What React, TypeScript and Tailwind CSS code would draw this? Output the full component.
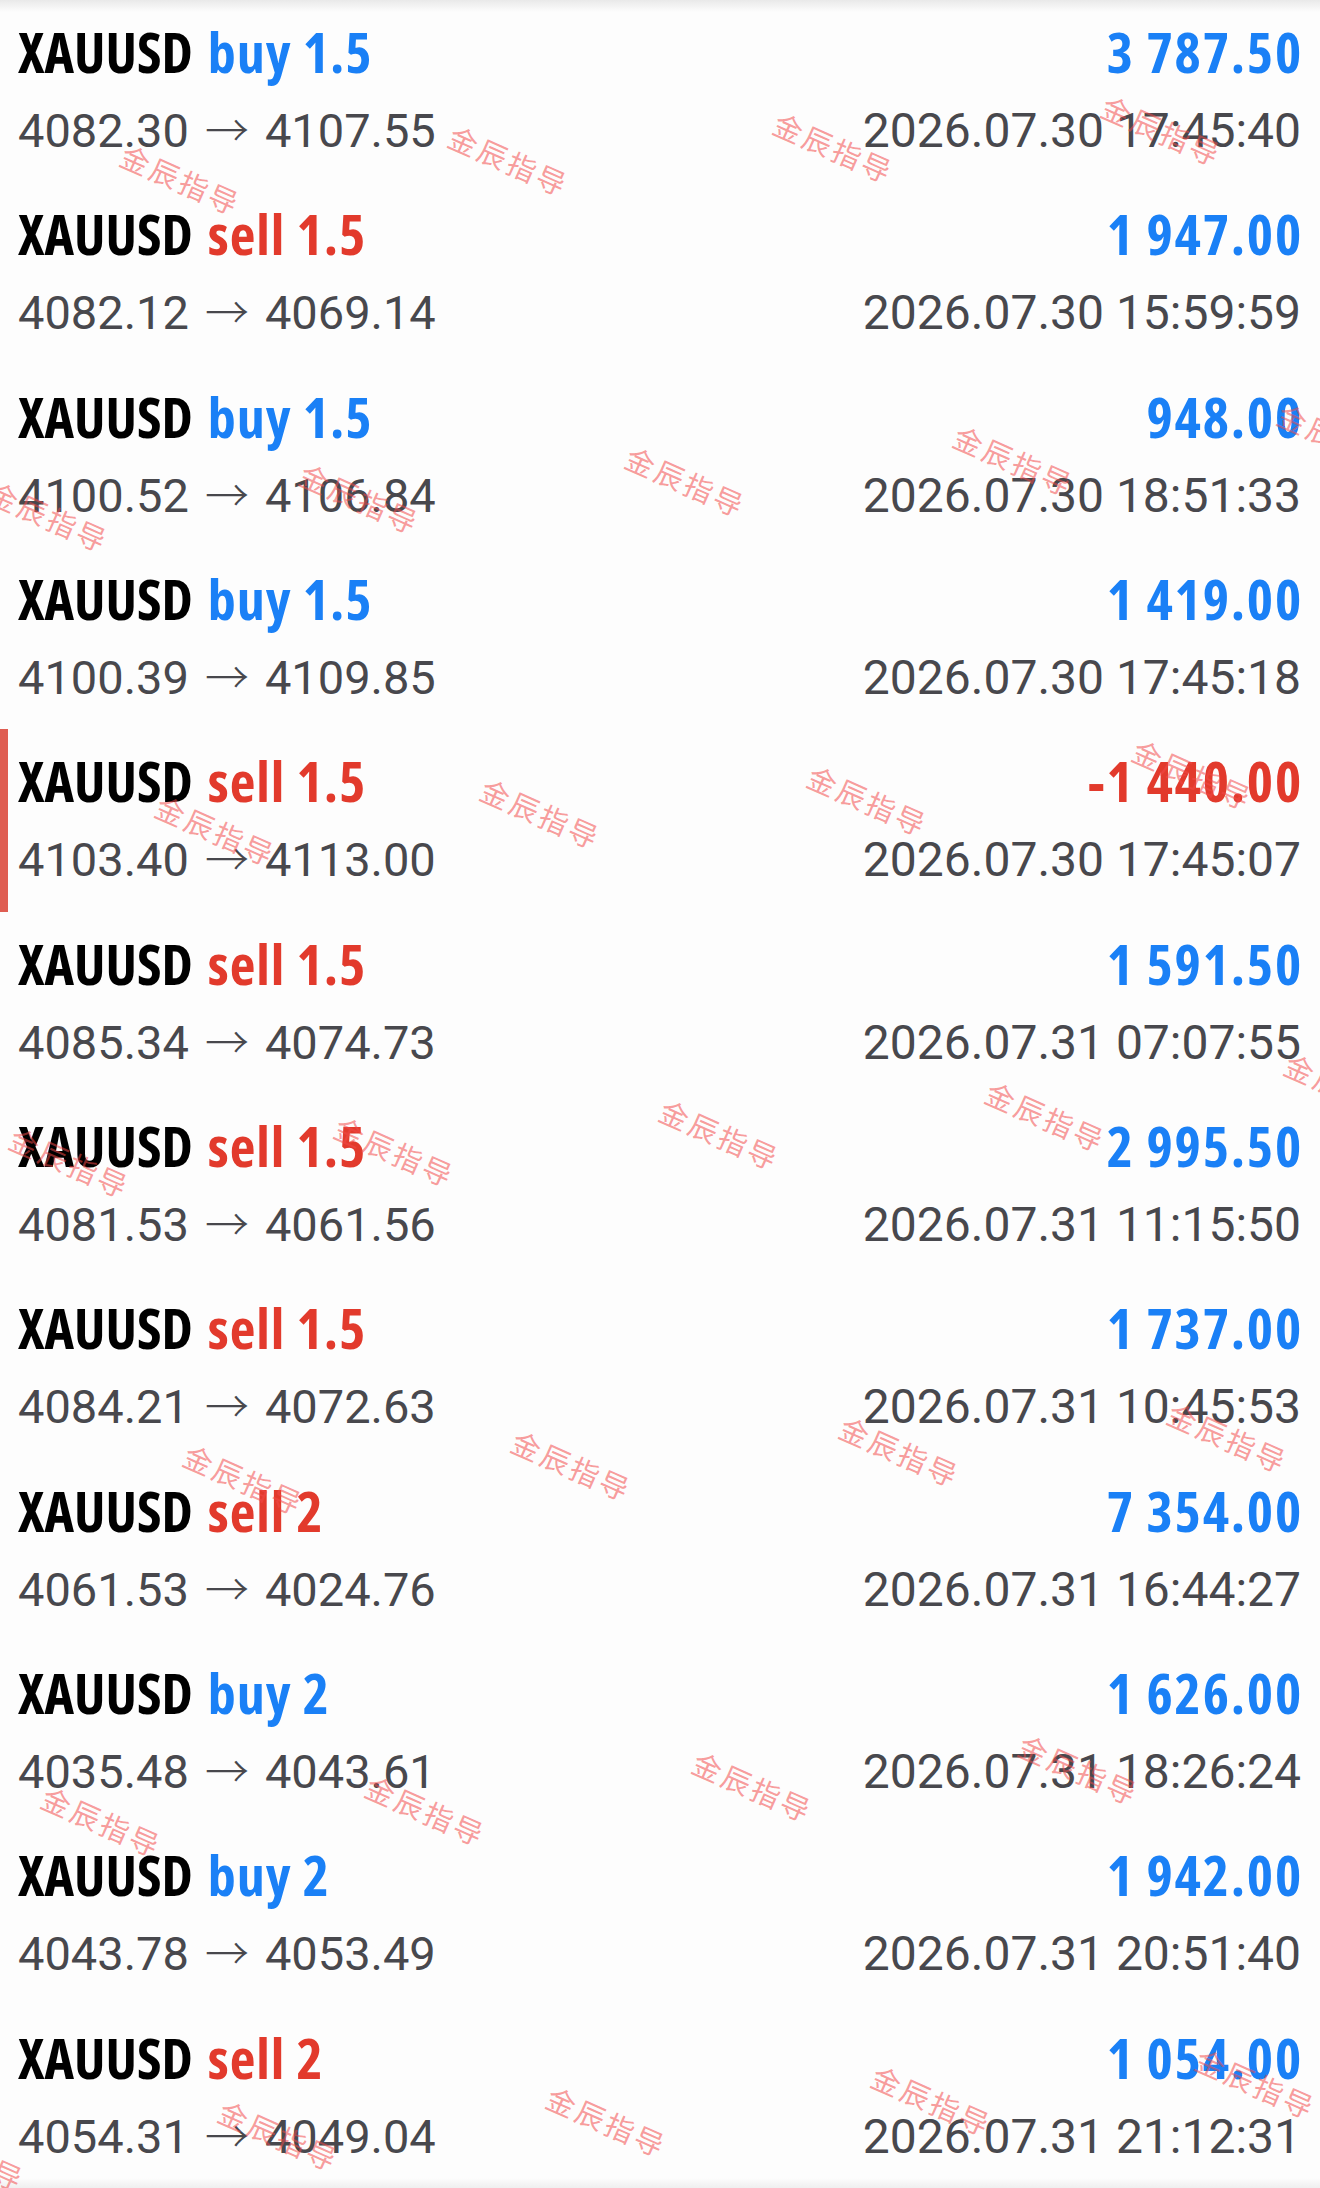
import React from "react";

type Trade = {
  side: "buy" | "sell";
  lot: string;
  profit: string;
  open: string;
  close: string;
  time: string;
  active?: boolean;
};

const trades: Trade[] = [
  { side: "buy", lot: "1.5", profit: "3 787.50", open: "4082.30", close: "4107.55", time: "2026.07.30 17:45:40" },
  { side: "sell", lot: "1.5", profit: "1 947.00", open: "4082.12", close: "4069.14", time: "2026.07.30 15:59:59" },
  { side: "buy", lot: "1.5", profit: "948.00", open: "4100.52", close: "4106.84", time: "2026.07.30 18:51:33" },
  { side: "buy", lot: "1.5", profit: "1 419.00", open: "4100.39", close: "4109.85", time: "2026.07.30 17:45:18" },
  { side: "sell", lot: "1.5", profit: "-1 440.00", open: "4103.40", close: "4113.00", time: "2026.07.30 17:45:07", active: true },
  { side: "sell", lot: "1.5", profit: "1 591.50", open: "4085.34", close: "4074.73", time: "2026.07.31 07:07:55" },
  { side: "sell", lot: "1.5", profit: "2 995.50", open: "4081.53", close: "4061.56", time: "2026.07.31 11:15:50" },
  { side: "sell", lot: "1.5", profit: "1 737.00", open: "4084.21", close: "4072.63", time: "2026.07.31 10:45:53" },
  { side: "sell", lot: "2", profit: "7 354.00", open: "4061.53", close: "4024.76", time: "2026.07.31 16:44:27" },
  { side: "buy", lot: "2", profit: "1 626.00", open: "4035.48", close: "4043.61", time: "2026.07.31 18:26:24" },
  { side: "buy", lot: "2", profit: "1 942.00", open: "4043.78", close: "4053.49", time: "2026.07.31 20:51:40" },
  { side: "sell", lot: "2", profit: "1 054.00", open: "4054.31", close: "4049.04", time: "2026.07.31 21:12:31" },
];

const marks: string[] = [
  "left-[181px] top-[179px]",
  "left-[509px] top-[160px]",
  "left-[834px] top-[147px]",
  "left-[1162px] top-[130px]",
  "left-[49px] top-[516px]",
  "left-[360px] top-[498px]",
  "left-[686px] top-[481px]",
  "left-[1014px] top-[460px]",
  "left-[1338px] top-[438px]",
  "left-[216px] top-[830px]",
  "left-[541px] top-[813px]",
  "left-[868px] top-[800px]",
  "left-[1193px] top-[774px]",
  "left-[70px] top-[1162px]",
  "left-[395px] top-[1151px]",
  "left-[720px] top-[1134px]",
  "left-[1046px] top-[1116px]",
  "left-[1345px] top-[1088px]",
  "left-[244px] top-[1479px]",
  "left-[572px] top-[1465px]",
  "left-[900px] top-[1451px]",
  "left-[1228px] top-[1437px]",
  "left-[102px] top-[1821px]",
  "left-[426px] top-[1810px]",
  "left-[753px] top-[1786px]",
  "left-[1079px] top-[1769px]",
  "left-[-35px] top-[2155px]",
  "left-[279px] top-[2135px]",
  "left-[607px] top-[2121px]",
  "left-[932px] top-[2100px]",
  "left-[1256px] top-[2083px]",
];

const condensed = { fontFamily: "'Open Sans', 'Roboto Condensed', sans-serif" };
const digits = { fontFamily: "Roboto, 'Liberation Sans', sans-serif" };

function Row({ t }: { t: Trade }) {
  const sideColor = t.side === "buy" ? "text-[#1a80f6]" : "text-[#e23a2c]";
  const negative = t.profit.startsWith("-");
  return (
    <div
      className={
        "flex h-[182.33px] flex-col pr-[19px] pt-[23px] " +
        (t.active ? "border-l-[8px] border-[#df5d52] pl-[10px]" : "pl-[18px]")
      }
    >
      <div className="flex items-baseline justify-between text-[56px] leading-[56px]">
        <span className="font-bold font-stretch-[75%] text-black" style={condensed}>
          XAUUSD
          <span className={"ml-[15px] tracking-[1px] " + sideColor}>
            {t.side} {t.lot}
          </span>
        </span>
        <span
          className={
            "-mr-[2px] font-bold font-stretch-[75%] tracking-[1.8px] " +
            (negative ? "text-[#e23a2c]" : "text-[#1a80f6]")
          }
          style={condensed}
        >
          {t.profit}
        </span>
      </div>
      <div
        className="mt-[25px] flex items-baseline justify-between text-[48px] leading-[48px] text-[#48484d]"
        style={digits}
      >
        <span className="flex items-baseline text-[47px]">
          <span>{t.open}</span>
          <span
            className="mx-[16px] text-[44px] font-light"
            style={{ fontFamily: "'Noto Sans CJK SC', sans-serif" }}
          >
            →
          </span>
          <span>{t.close}</span>
        </span>
        <span>{t.time}</span>
      </div>
    </div>
  );
}

export default function App() {
  return (
    <div className="relative h-[2188px] w-full overflow-hidden bg-[#fdfdfd]">
      <div className="flex flex-col">
        {trades.map((t, i) => (
          <Row key={i} t={t} />
        ))}
      </div>
      <div className="pointer-events-none absolute inset-x-0 top-0 h-[12px] bg-gradient-to-b from-[#e9e9e9] to-transparent" />
      <div className="pointer-events-none absolute inset-x-0 bottom-0 h-[10px] bg-gradient-to-t from-[#efefef] to-transparent" />
      {marks.map((m, i) => (
        <span
          key={i}
          className={
            "pointer-events-none absolute -translate-x-1/2 -translate-y-1/2 rotate-[24deg] whitespace-nowrap text-[29px] leading-none tracking-[3px] text-[#f24a4a]/55 " +
            m
          }
          style={{ fontFamily: "'Noto Sans CJK SC', sans-serif" }}
        >
          金辰指导
        </span>
      ))}
    </div>
  );
}
